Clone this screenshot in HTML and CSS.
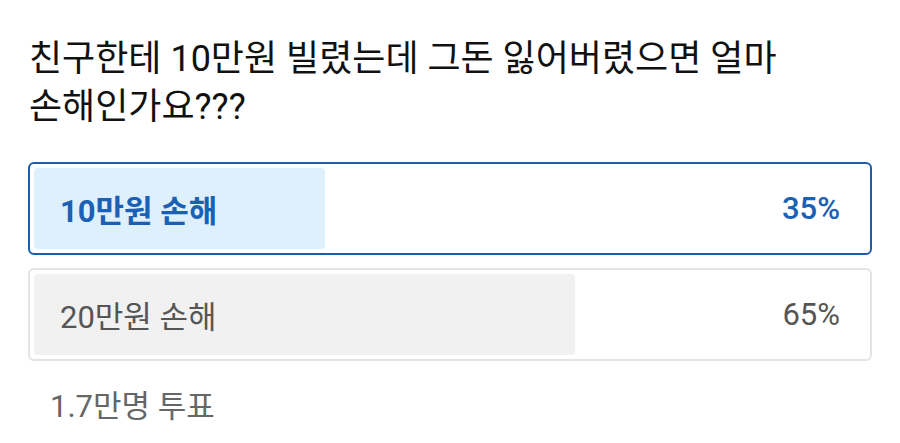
FILE: index.html
```html
<!DOCTYPE html>
<html lang="ko">
<head>
<meta charset="utf-8">
<link rel="stylesheet" href="styles.css">
</head>
<body>
<div class="poll">
  <h1 class="question">친구한테 10만원 빌렸는데 그돈 잃어버렸으면 얼마<br>손해인가요???</h1>
  <div class="options">
    <div class="option selected">
      <div class="fill" style="width:calc((100% - 8px) * 0.35)"></div>
      <span class="label">10만원 손해</span>
      <span class="pct">35%</span>
    </div>
    <div class="option">
      <div class="fill" style="width:calc((100% - 8px) * 0.65)"></div>
      <span class="label">20만원 손해</span>
      <span class="pct">65%</span>
    </div>
  </div>
  <div class="votes">1.7만명 투표</div>
</div>
</body>
</html>
```
FILE: styles.css
```css
* { box-sizing: border-box; }
html, body { margin: 0; padding: 0; background: #fff; }
body {
  font-family: Roboto, "Noto Sans CJK KR", sans-serif;
  width: 900px;
  height: 443px;
  overflow: hidden;
}
.poll {
  padding: 35px 28px 0 28px;
}
.question {
  margin: 0 0 0 1px;
  font-size: 36px;
  font-weight: 400;
  line-height: 48px;
  color: #111;
}
.options {
  margin-top: 31px;
  display: flex;
  flex-direction: column;
  gap: 13px;
}
.option {
  position: relative;
  height: 93px;
  border: 2px solid #e4e4e4;
  border-radius: 6px;
  padding: 4px;
  display: flex;
  align-items: center;
  justify-content: space-between;
}
.option .fill {
  position: absolute;
  left: 4px;
  top: 4px;
  bottom: 4px;
  background: #f1f1f1;
  border-radius: 4px;
}
.option .label, .option .pct {
  position: relative;
  font-size: 31px;
  color: #555;
  padding: 0 26px;
}
.option.selected { border-color: #1c5cab; }
.option.selected .fill { background: #dff0fd; }
.option.selected .label, .option.selected .pct {
  color: #1a60b5;
  font-weight: 700;
}
.option.selected .pct { font-weight: 500; }
.votes {
  margin: 20px 0 0 22px;
  font-size: 31px;
  color: #666;
}
```
